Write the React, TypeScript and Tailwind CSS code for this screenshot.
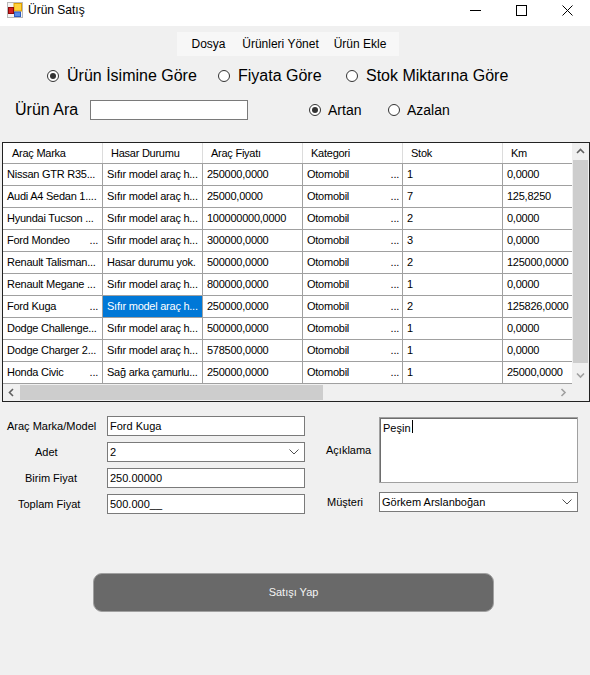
import React from "react";

type Row = { a: string; pad?: boolean; b?: string; c: string; s: string; k: string; sel?: boolean };

const rows: Row[] = [
  { a: "Nissan GTR R35...", c: "250000,0000", s: "1", k: "0,0000" },
  { a: "Audi A4 Sedan 1....", c: "25000,0000", s: "7", k: "125,8250" },
  { a: "Hyundai Tucson ...", c: "100000000,0000", s: "2", k: "0,0000" },
  { a: "Ford Mondeo", pad: true, c: "300000,0000", s: "3", k: "0,0000" },
  { a: "Renault Talisman...", b: "Hasar durumu yok.", c: "500000,0000", s: "2", k: "125000,0000" },
  { a: "Renault Megane ...", c: "800000,0000", s: "1", k: "0,0000" },
  { a: "Ford Kuga", pad: true, c: "250000,0000", s: "2", k: "125826,0000", sel: true },
  { a: "Dodge Challenge...", c: "500000,0000", s: "1", k: "0,0000" },
  { a: "Dodge Charger 2...", c: "578500,0000", s: "1", k: "0,0000" },
  { a: "Honda Civic", pad: true, b: "Sağ arka çamurlu...", c: "250000,0000", s: "1", k: "25000,0000" },
];

const headers = ["Araç Marka", "Hasar Durumu", "Araç Fiyatı", "Kategori", "Stok", "Km"];

function Radio({ checked }: { checked?: boolean }) {
  return (
    <span className="w-[12px] h-[12px] rounded-full border border-[#333333] bg-white flex items-center justify-center shrink-0">
      {checked && <span className="w-[6px] h-[6px] rounded-full bg-[#333333]" />}
    </span>
  );
}

function Chevron({ dir, color }: { dir: "up" | "down" | "left" | "right"; color: string }) {
  const d =
    dir === "up"
      ? "M1 5 L4.5 1.5 L8 5"
      : dir === "down"
      ? "M1 1.5 L4.5 5 L8 1.5"
      : dir === "left"
      ? "M5 1 L1.5 4.5 L5 8"
      : "M1.5 1 L5 4.5 L1.5 8";
  const w = dir === "up" || dir === "down" ? 9 : 7;
  const h = dir === "up" || dir === "down" ? 7 : 9;
  return (
    <svg width={w} height={h} viewBox={`0 0 ${w} ${h}`}>
      <path d={d} stroke={color} strokeWidth="1.6" fill="none" />
    </svg>
  );
}

function ComboArrow() {
  return (
    <svg width="10" height="6" viewBox="0 0 10 6">
      <path d="M0.5 0.5 L5 5 L9.5 0.5" stroke="#505050" strokeWidth="1" fill="none" />
    </svg>
  );
}

function AppIcon() {
  return (
    <svg width="16" height="16" viewBox="0 0 16 16">
      <rect x="0.5" y="0.5" width="15" height="15" fill="#f4f4f4" stroke="#b8b8b8" />
      <rect x="7" y="1.5" width="7.5" height="7.5" fill="#ffd23c" stroke="#e0a000" />
      <rect x="1.5" y="5.5" width="5" height="6" fill="#d42020" stroke="#8a0a0a" />
      <rect x="7.5" y="10" width="6" height="4.5" fill="#5a8de8" stroke="#2c5cc0" />
    </svg>
  );
}

export default function App() {
  return (
    <div className="w-[590px] h-[675px] bg-[#f0f0f0] text-black font-['Liberation_Sans',Arial,sans-serif] overflow-hidden">
      {/* Title bar */}
      <div className="h-[26px] bg-white flex items-start">
        <div className="h-[20px] flex items-center pl-[7px]">
          <AppIcon />
          <span className="ml-[5px] text-[12px]">Ürün Satış</span>
        </div>
        <div className="ml-auto flex h-[20px]">
          <div className="w-[46px] flex items-center justify-center">
            <svg width="11" height="10" viewBox="0 0 11 10">
              <path d="M0 5.5 H11" stroke="#000" strokeWidth="1" />
            </svg>
          </div>
          <div className="w-[46px] flex items-center justify-center">
            <svg width="11" height="11" viewBox="0 0 11 11">
              <rect x="0.5" y="0.5" width="10" height="10" stroke="#000" strokeWidth="1" fill="none" />
            </svg>
          </div>
          <div className="w-[46px] flex items-center justify-center">
            <svg width="11" height="11" viewBox="0 0 11 11">
              <path d="M0.5 0.5 L10.5 10.5 M10.5 0.5 L0.5 10.5" stroke="#000" strokeWidth="1" fill="none" />
            </svg>
          </div>
        </div>
      </div>

      {/* Menu strip */}
      <div className="mt-[6px] ml-[177px] w-[222px] h-[24px] bg-[#f7f7f7] flex items-center text-[12px]">
        <span className="w-[63px] text-center">Dosya</span>
        <span className="w-[81px] text-center">Ürünleri Yönet</span>
        <span className="w-[78px] text-center">Ürün Ekle</span>
      </div>

      {/* Sort options */}
      <div className="mt-[10px] h-[20px] pl-[47px] flex items-center text-[16px]">
        <label className="w-[171px] flex items-center gap-[8px]">
          <Radio checked />
          <span>Ürün İsimine Göre</span>
        </label>
        <label className="w-[128px] flex items-center gap-[8px]">
          <Radio />
          <span>Fiyata Göre</span>
        </label>
        <label className="flex items-center gap-[8px]">
          <Radio />
          <span>Stok Miktarına Göre</span>
        </label>
      </div>

      {/* Search row */}
      <div className="mt-[14px] h-[20px] flex items-center">
        <span className="w-[90px] pl-[15px] text-[16px]">Ürün Ara</span>
        <div className="w-[158px] h-[20px] bg-white border border-[#7a7a7a]" />
        <label className="ml-[61px] w-[79px] flex items-center gap-[7px] text-[14px]">
          <Radio checked />
          <span>Artan</span>
        </label>
        <label className="flex items-center gap-[7px] text-[14px]">
          <Radio />
          <span>Azalan</span>
        </label>
      </div>

      {/* Data grid */}
      <div className="mt-[22px] ml-[2px] w-[588px] h-[260px] border border-[#222222] flex flex-col bg-white text-[11px] tracking-[-0.25px]">
        <div className="flex h-[241px]">
          <div className="w-[569px] h-full overflow-hidden">
            <div className="flex h-[21px] border-b border-[#a0a0a0] w-[600px]">
              {headers.map((h, i) => (
                <div
                  key={h}
                  className={`w-[100px] shrink-0 h-full border-r border-[#dcdcdc] flex items-center whitespace-nowrap ${
                    i === 0 ? "pl-[9px]" : "pl-[8px]"
                  }`}
                >
                  {h}
                </div>
              ))}
            </div>
            {rows.map((r, idx) => (
              <div key={idx} className="flex h-[22px] border-b border-[#a0a0a0] w-[600px]">
                <div className="w-[100px] shrink-0 h-full border-r border-[#a0a0a0] pl-[4px] pr-[4px] flex items-center justify-between overflow-hidden whitespace-nowrap">
                  <span>{r.a}</span>
                  {r.pad && <span>...</span>}
                </div>
                <div
                  className={`w-[100px] shrink-0 h-full border-r border-[#a0a0a0] pl-[4px] flex items-center overflow-hidden whitespace-nowrap ${
                    r.sel ? "bg-[#0078d7] text-white" : ""
                  }`}
                >
                  {r.b ?? "Sıfır model araç h..."}
                </div>
                <div className="w-[100px] shrink-0 h-full border-r border-[#a0a0a0] pl-[4px] flex items-center overflow-hidden whitespace-nowrap">
                  {r.c}
                </div>
                <div className="w-[100px] shrink-0 h-full border-r border-[#a0a0a0] pl-[4px] pr-[3px] flex items-center justify-between overflow-hidden whitespace-nowrap">
                  <span>Otomobil</span>
                  <span>...</span>
                </div>
                <div className="w-[100px] shrink-0 h-full border-r border-[#a0a0a0] pl-[4px] flex items-center overflow-hidden whitespace-nowrap">
                  {r.s}
                </div>
                <div className="w-[100px] shrink-0 h-full border-r border-[#a0a0a0] pl-[4px] flex items-center overflow-hidden whitespace-nowrap">
                  {r.k}
                </div>
              </div>
            ))}
          </div>
          {/* vertical scrollbar */}
          <div className="w-[17px] h-full bg-[#f0f0f0] flex flex-col">
            <div className="h-[17px] flex items-center justify-center">
              <Chevron dir="up" color="#606060" />
            </div>
            <div className="mx-[1px] h-[203px] bg-[#cdcdcd]" />
            <div className="flex-1" />
            <div className="h-[17px] flex items-center justify-center">
              <Chevron dir="down" color="#a0a0a0" />
            </div>
          </div>
        </div>
        {/* horizontal scrollbar */}
        <div className="flex h-[17px]">
          <div className="w-[569px] h-full bg-[#f0f0f0] flex items-center">
            <div className="w-[17px] h-full flex items-center justify-center">
              <Chevron dir="left" color="#606060" />
            </div>
            <div className="w-[303px] h-[15px] bg-[#cdcdcd]" />
            <div className="flex-1" />
            <div className="w-[17px] h-full flex items-center justify-center">
              <Chevron dir="right" color="#a0a0a0" />
            </div>
          </div>
          <div className="w-[17px] h-full bg-[#f0f0f0]" />
        </div>
      </div>

      {/* Form */}
      <div className="mt-[14px] flex text-[11px]">
        <div className="w-[306px] flex flex-col gap-[6px]">
          <div className="h-[20px] flex items-center">
            <span className="w-[107px] pl-[7px]">Araç Marka/Model</span>
            <div className="w-[198px] h-[20px] bg-white border border-[#7a7a7a] pl-[2px] flex items-center">Ford Kuga</div>
          </div>
          <div className="h-[20px] flex items-center">
            <span className="w-[107px] pl-[35px]">Adet</span>
            <div className="w-[198px] h-[20px] bg-white border border-[#7a7a7a] pl-[2px] pr-[5px] flex items-center justify-between">
              <span>2</span>
              <ComboArrow />
            </div>
          </div>
          <div className="h-[20px] flex items-center">
            <span className="w-[107px] pl-[25px]">Birim Fiyat</span>
            <div className="w-[198px] h-[20px] bg-white border border-[#7a7a7a] pl-[2px] flex items-center">250.00000</div>
          </div>
          <div className="h-[20px] flex items-center">
            <span className="w-[107px] pl-[18px]">Toplam Fiyat</span>
            <div className="w-[198px] h-[20px] bg-white border border-[#7a7a7a] pl-[2px] flex items-center">500.000__</div>
          </div>
        </div>
        <div className="ml-[20px] flex flex-col">
          <div className="mt-[1px] h-[66px] flex items-center">
            <span className="w-[53px]">Açıklama</span>
            <div className="w-[199px] h-[66px] bg-white border border-[#a0a0a0] shadow-[inset_1px_1px_0_#6d6d6d] pl-[3px] pt-[2px] flex items-start">
              <span>Peşin</span>
              <span className="ml-[1px] mt-[0px] w-[1px] h-[13px] bg-black" />
            </div>
          </div>
          <div className="mt-[9px] h-[20px] flex items-center">
            <span className="w-[53px] pl-[1px]">Müşteri</span>
            <div className="w-[199px] h-[20px] bg-white border border-[#7a7a7a] pl-[2px] pr-[5px] flex items-center justify-between">
              <span>Görkem Arslanboğan</span>
              <ComboArrow />
            </div>
          </div>
        </div>
      </div>

      {/* Button */}
      <div className="mt-[59px] ml-[93px] w-[401px] h-[39px] rounded-[9px] bg-[#696969] border border-[#a0a0a0] text-[#f4f4f4] text-[11px] flex items-center justify-center">
        Satışı Yap
      </div>
    </div>
  );
}
